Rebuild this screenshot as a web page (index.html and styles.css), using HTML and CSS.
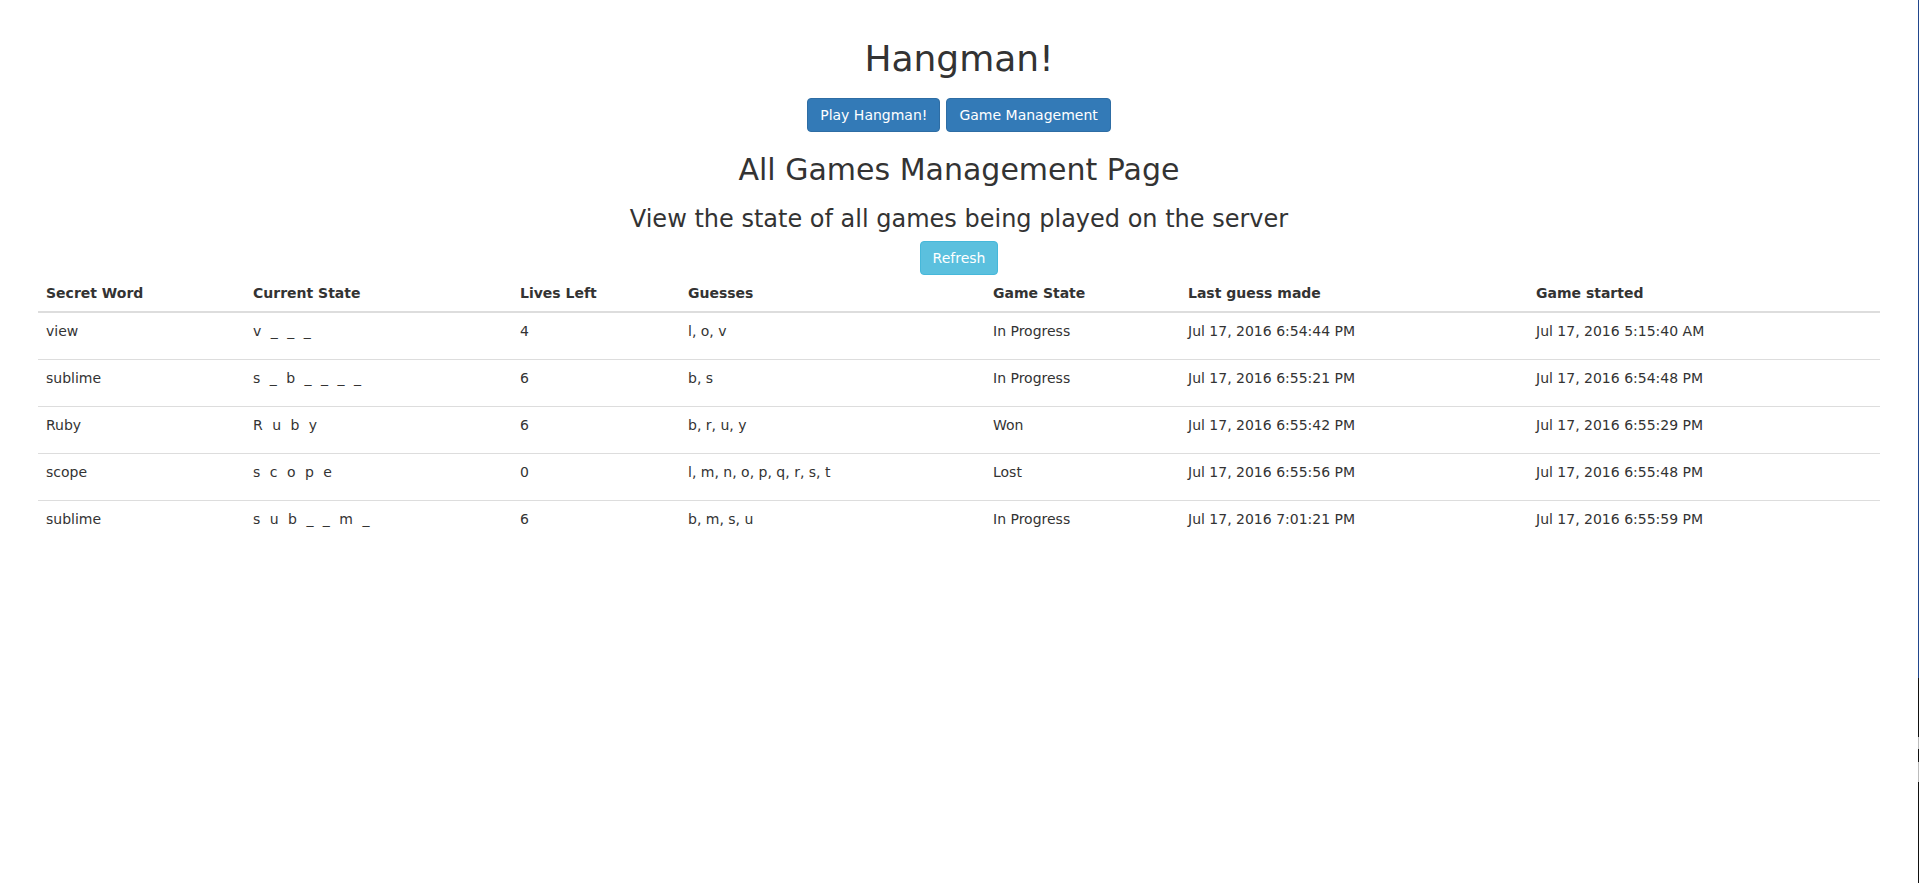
FILE: index.html
```html
<!DOCTYPE html>
<html lang="en">
<head>
<meta charset="utf-8">
<title>Hangman!</title>
<link rel="stylesheet" href="styles.css">
</head>
<body>
<div class="page">
  <h1 class="title">Hangman!</h1>
  <nav class="nav">
    <a class="btn btn-primary" href="#">Play Hangman!</a>
    <a class="btn btn-primary" href="#">Game Management</a>
  </nav>
  <h2 class="page-title">All Games Management Page</h2>
  <h3 class="subtitle">View the state of all games being played on the server</h3>
  <div class="refresh-row">
    <button class="btn btn-info" type="button">Refresh</button>
  </div>
  <table class="games">
    <colgroup>
      <col class="c-word">
      <col class="c-state">
      <col class="c-lives">
      <col class="c-guesses">
      <col class="c-game">
      <col class="c-last">
      <col class="c-start">
    </colgroup>
    <thead>
      <tr>
        <th>Secret Word</th>
        <th>Current State</th>
        <th>Lives Left</th>
        <th>Guesses</th>
        <th>Game State</th>
        <th>Last guess made</th>
        <th>Game started</th>
      </tr>
    </thead>
    <tbody>
      <tr>
        <td>view</td>
        <td class="letters">v _ _ _</td>
        <td>4</td>
        <td>l, o, v</td>
        <td>In Progress</td>
        <td>Jul 17, 2016 6:54:44 PM</td>
        <td>Jul 17, 2016 5:15:40 AM</td>
      </tr>
      <tr>
        <td>sublime</td>
        <td class="letters">s _ b _ _ _ _</td>
        <td>6</td>
        <td>b, s</td>
        <td>In Progress</td>
        <td>Jul 17, 2016 6:55:21 PM</td>
        <td>Jul 17, 2016 6:54:48 PM</td>
      </tr>
      <tr>
        <td>Ruby</td>
        <td class="letters">R u b y</td>
        <td>6</td>
        <td>b, r, u, y</td>
        <td>Won</td>
        <td>Jul 17, 2016 6:55:42 PM</td>
        <td>Jul 17, 2016 6:55:29 PM</td>
      </tr>
      <tr>
        <td>scope</td>
        <td class="letters">s c o p e</td>
        <td>0</td>
        <td>l, m, n, o, p, q, r, s, t</td>
        <td>Lost</td>
        <td>Jul 17, 2016 6:55:56 PM</td>
        <td>Jul 17, 2016 6:55:48 PM</td>
      </tr>
      <tr>
        <td>sublime</td>
        <td class="letters">s u b _ _ m _</td>
        <td>6</td>
        <td>b, m, s, u</td>
        <td>In Progress</td>
        <td>Jul 17, 2016 7:01:21 PM</td>
        <td>Jul 17, 2016 6:55:59 PM</td>
      </tr>
    </tbody>
  </table>
</div>
</body>
</html>
```
FILE: styles.css
```css
html {
  background: #fff linear-gradient(to bottom,
      #22468c 0, #22468c 678px,
      #111 678px, #111 737px,
      #bbb 737px, #bbb 749px,
      #111 749px, #111 762px,
      #bbb 762px, #bbb 782px,
      #111 782px, #111 883px) right top / 1px 883px no-repeat fixed;
}

body {
  margin: 0 1px 0 0;
  font-family: "DejaVu Sans", Verdana, sans-serif;
  font-size: 14px;
  line-height: 20px;
  color: #333;
}

.page {
  padding: 39px 38px 40px;
  text-align: center;
}

.title {
  margin: 0;
  font-size: 36px;
  line-height: 40px;
  font-weight: 500;
}

.nav {
  margin-top: 19px;
  display: flex;
  justify-content: center;
  gap: 6px;
}

.btn {
  display: inline-block;
  box-sizing: border-box;
  height: 34px;
  padding: 6px 12px;
  font-family: inherit;
  font-size: 14px;
  line-height: 20px;
  border: 1px solid transparent;
  border-radius: 4px;
  color: #fff;
  text-decoration: none;
  cursor: pointer;
}

.btn-primary {
  background: #337ab7;
  border-color: #2e6da4;
}

.btn-info {
  background: #5bc0de;
  border-color: #46b8da;
}

.page-title {
  margin: 21px 0 0;
  font-size: 30px;
  line-height: 33px;
  font-weight: 500;
}

.subtitle {
  margin: 20px 0 0;
  font-size: 24px;
  line-height: 26px;
  font-weight: 500;
}

.refresh-row {
  margin-top: 9px;
  display: flex;
  justify-content: center;
}

.games {
  width: 100%;
  table-layout: fixed;
  border-collapse: collapse;
  border-spacing: 0;
  text-align: left;
}

.c-word { width: 207px; }
.c-state { width: 267px; }
.c-lives { width: 168px; }
.c-guesses { width: 305px; }
.c-game { width: 195px; }
.c-last { width: 348px; }
.c-start { width: 352px; }

.games th {
  padding: 8px;
  font-weight: bold;
  vertical-align: bottom;
  border-bottom: 2px solid #ddd;
}

.games td {
  padding: 8px 8px 18px;
  vertical-align: top;
  border-top: 1px solid #ddd;
}

.games tbody tr:first-child td {
  border-top: 0;
}

.letters {
  word-spacing: 5px;
}
```
